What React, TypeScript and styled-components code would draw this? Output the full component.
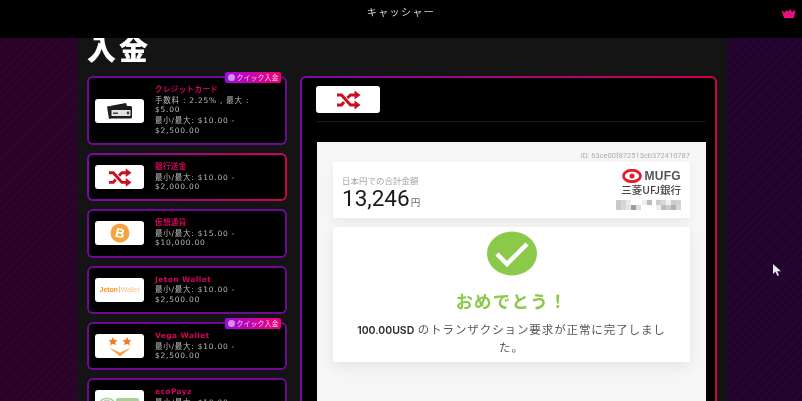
import styled, { createGlobalStyle } from 'styled-components';

const GlobalStyle = createGlobalStyle`
  html, body {
    margin: 0;
    height: 401px;
    overflow: hidden;
    background: #000;
  }
  * {
    box-sizing: border-box;
  }
  #root {
    font-family: "DejaVu Sans", "Noto Sans CJK JP", sans-serif;
  }
`;

const Page = styled.div`
  position: relative;
  width: 802px;
  height: 401px;
  overflow: hidden;
  filter: blur(0.35px);
  background-image:
    repeating-linear-gradient(
      135deg,
      rgba(0, 0, 0, 0.13) 0 3px,
      transparent 3px 6px
    ),
    linear-gradient(90deg, #2e042c 0 78px, #250432 727px);
`;

const TopBar = styled.header`
  height: 38px;
  background: #000;
  display: flex;
  align-items: flex-start;
  justify-content: center;
  position: relative;
  z-index: 1;
  color: #d8d8d8;
  font-family: "Noto Sans CJK JP", sans-serif;
  font-size: 10px;
  letter-spacing: 1.4px;
  padding-top: 4px;
  line-height: 16px;
`;

const Crown = styled.svg`
  position: absolute;
  right: 6px;
  top: 9px;
`;

const Container = styled.main`
  width: 649px;
  height: 363px;
  margin-left: 78px;
  background: #141414;
  padding: 0 10px 0 9px;
`;

const Title = styled.h1`
  margin: 0;
  height: 38px;
  font-family: "Noto Sans CJK JP", sans-serif;
  font-size: 29px;
  font-weight: 900;
  line-height: 18px;
  letter-spacing: 3px;
  color: #fff;
`;

const Columns = styled.div`
  display: flex;
  gap: 13px;
  align-items: flex-start;
`;

const MethodList = styled.div`
  width: 200px;
  display: flex;
  flex-direction: column;
  gap: 8px;
  flex-shrink: 0;
`;

const MethodCard = styled.div<{ $active?: boolean; $h: number }>`
  position: relative;
  height: ${(p) => p.$h}px;
  border: 2px solid transparent;
  border-radius: 6px;
  background:
    linear-gradient(#000, #000) padding-box,
    ${(p) =>
        p.$active
          ? 'linear-gradient(90deg, #7a0aa8, #d3004f)'
          : 'linear-gradient(#6f0a96, #6f0a96)'}
      border-box;
  display: flex;
  align-items: center;
  padding-left: 6px;
  gap: 11px;
`;

const LogoBox = styled.div<{ $w?: number; $h?: number }>`
  width: ${(p) => p.$w ?? 49}px;
  height: ${(p) => p.$h ?? 24}px;
  flex-shrink: 0;
  background: #fff;
  border-radius: 3px;
  display: flex;
  align-items: center;
  justify-content: center;
  overflow: hidden;
`;

const EcoLogoBox = styled(LogoBox)`
  align-items: flex-start;
  padding-top: 6px;
`;

const JetonLogo = styled.span`
  font-family: "Liberation Sans", sans-serif;
  font-size: 7px;
  font-weight: 700;
  color: #f7931e;
  letter-spacing: -0.1px;
  white-space: nowrap;
  i {
    font-style: normal;
    font-weight: 400;
    color: #f9c48a;
    border-left: 1px solid #f9c48a;
    margin-left: 1px;
    padding-left: 1px;
  }
`;

const MethodText = styled.div`
  display: flex;
  flex-direction: column;
  color: #b9b9b9;
  font-size: 7.5px;
  line-height: 9.5px;
  letter-spacing: 0.75px;
  width: 118px;
  padding-top: 1px;
`;

const MethodName = styled.div`
  color: #d4005e;
  font-weight: 700;
  letter-spacing: 0.4px;
  margin-bottom: 1px;
`;

const MethodLine = styled.div`
  margin-bottom: 1.5px;
`;

const QuickBadge = styled.div`
  position: absolute;
  top: -6px;
  right: 4px;
  height: 11px;
  width: 56px;
  border-radius: 2px;
  background: linear-gradient(90deg, #a00ae0, #f00070);
  color: #f3d3ee;
  font-family: "Noto Sans CJK JP", sans-serif;
  font-size: 7px;
  line-height: 11px;
  display: flex;
  align-items: center;
  justify-content: center;
  gap: 2px;
  white-space: nowrap;
`;

const BadgeDot = styled.span`
  width: 7px;
  height: 7px;
  border-radius: 50%;
  background: #d58fe8;
`;

const DetailPanel = styled.section`
  width: 418px;
  height: 340px;
  border: 2px solid transparent;
  border-radius: 6px;
  background:
    linear-gradient(#000, #000) padding-box,
    linear-gradient(90deg, #7a0aa8, #d3004f) border-box;
  padding: 8px 9px 0 15px;
`;

const DetailHead = styled.div`
  height: 36px;
  margin-left: -1px;
  border-bottom: 1px solid #1b1b1b;
`;

const Sheet = styled.div`
  margin-top: 20px;
  height: 300px;
  background: #f6f6f6;
  padding: 8px 16px 0;
`;

const OrderId = styled.div`
  text-align: right;
  font-family: Roboto, sans-serif;
  font-size: 7.5px;
  line-height: 12px;
  color: #adadad;
`;

const WhiteCard = styled.div`
  background: #fff;
  border-radius: 2px;
  box-shadow: 0 4px 10px rgba(0, 0, 0, 0.05);
`;

const AmountCard = styled(WhiteCard)`
  height: 56px;
  display: flex;
  justify-content: space-between;
  padding: 12px 9px 0 9px;
`;

const AmountLabel = styled.div`
  font-family: "Noto Sans CJK JP", sans-serif;
  font-size: 8.5px;
  line-height: 12px;
  color: #a3a3a3;
`;

const AmountValue = styled.div`
  font-family: Roboto, sans-serif;
  font-size: 22.5px;
  line-height: 25px;
  color: #1a1a1a;
  small {
    font-family: "Noto Sans CJK JP", sans-serif;
    font-size: 9.5px;
    color: #666;
    margin-left: 1px;
  }
`;

const BankBlock = styled.div`
  display: flex;
  flex-direction: column;
  align-items: flex-end;
  margin-top: -5px;
`;

const MufgRow = styled.div`
  display: flex;
  align-items: center;
  gap: 2px;
  font-family: "Liberation Sans", sans-serif;
  font-weight: 700;
  font-size: 12px;
  line-height: 14px;
  letter-spacing: 0.3px;
  color: #555;
`;

const BankName = styled.div`
  font-family: "Noto Sans CJK JP", sans-serif;
  font-weight: 500;
  font-size: 10.5px;
  line-height: 13px;
  color: #444;
  margin-bottom: 4px;
`;

const ResultCard = styled(WhiteCard)`
  height: 135px;
  margin-top: 9px;
  display: flex;
  flex-direction: column;
  align-items: center;
  padding: 4px 22px 0;
  box-shadow: 0 5px 14px rgba(0, 0, 0, 0.07);
`;

const Congrats = styled.div`
  margin-top: 13px;
  font-family: "Noto Sans CJK JP", sans-serif;
  font-size: 17.5px;
  line-height: 24px;
  font-weight: 700;
  letter-spacing: 1.2px;
  color: #8bc94a;
`;

const ResultText = styled.p`
  margin: 8px 0 0;
  text-align: center;
  font-family: "Noto Sans CJK JP", sans-serif;
  font-size: 11.5px;
  line-height: 17px;
  letter-spacing: 0.9px;
  color: #555;
  b {
    font-family: Inter, sans-serif;
    font-size: 10.5px;
    font-weight: 600;
    letter-spacing: 0;
    color: #2a2a2a;
  }
`;

const Pointer = styled.svg`
  position: absolute;
  left: 773px;
  top: 264px;
`;

function ShuffleIcon({ size }: { size: number }) {
  return (
    <svg width={size} height={size * 0.8} viewBox="0 0 25 20" fill="none">
      <path
        d="M1 5h4.500l9 10H19M1 15h4.500l2.500-3M11.500 8l3-3H19"
        stroke="#c9101f"
        strokeWidth="3"
      />
      <path d="M18.500 0.500l6 4.500-6 4.500zM18.500 10.500l6 4.500-6 4.500z" fill="#c9101f" />
    </svg>
  );
}

function WalletIcon() {
  return (
    <svg width="27" height="16" viewBox="0 0 27 16">
      <path d="M1 3.500L20 0l1 3H4.500l.5 12.500L3 16z" fill="#1d1d1d" />
      <rect x="4" y="3" width="22" height="12.500" rx="1.500" fill="#1d1d1d" />
      <rect x="5.500" y="7" width="19" height="6" fill="#e2e2e2" />
      <rect x="7" y="9.500" width="5" height="1.500" fill="#444" />
      <circle cx="22" cy="10" r="1.400" fill="#444" />
    </svg>
  );
}

function BitcoinIcon() {
  return (
    <svg width="20" height="20" viewBox="0 0 20 20">
      <circle cx="10" cy="10" r="9.500" fill="#f7a440" />
      <text
        x="10"
        y="14.500"
        textAnchor="middle"
        fontFamily="Liberation Sans, sans-serif"
        fontWeight="700"
        fontSize="13"
        fill="#fff"
        transform="rotate(12 10 10)"
      >
        B
      </text>
    </svg>
  );
}

function VegaIcon() {
  return (
    <svg width="24" height="21" viewBox="0 0 24 21">
      <path
        d="M5 1l1.500 3 3 .3-2.200 2 .6 3-2.900-1.600-2.900 1.600.6-3L.5 4.300l3-.3zM19 1l1.500 3 3 .3-2.200 2 .6 3-2.900-1.600-2.900 1.600.6-3-2.200-2 3-.3z"
        fill="#f47b20"
      />
      <path d="M1 11.500l11 5 11-5-11 9z" fill="#f9a557" />
    </svg>
  );
}

function EcoPayzLogo() {
  return (
    <svg width="42" height="12" viewBox="0 0 42 12">
      <ellipse cx="8" cy="7" rx="7" ry="4.500" fill="none" stroke="#a9d096" strokeWidth="1.500" />
      <rect x="5" y="4.500" width="6" height="4" fill="#8a9a8a" />
      <rect x="17" y="2" width="23" height="8" rx="2" fill="#a9d096" />
    </svg>
  );
}

function MufgMark() {
  return (
    <svg width="20" height="14" viewBox="0 0 20 14">
      <ellipse cx="10" cy="7" rx="8.500" ry="5.700" fill="none" stroke="#e2202c" strokeWidth="2.800" />
      <circle cx="10" cy="7" r="2.500" fill="#e2202c" />
    </svg>
  );
}

const MOSAIC: ReadonlyArray<readonly [number, number, string]> = [
  [0, 0, '#cacaca'], [5, 0, '#d6d6d6'], [10, 0, '#ebebeb'], [26, 0, '#eeeeee'], [31, 0, '#bcbcbc'],
  [40, 0, '#cccccc'], [45, 0, '#d8d8d8'], [50, 0, '#f0f0f0'], [55, 0, '#cdcdcd'], [60, 0, '#d2d2d2'],
  [0, 5, '#c8c8c8'], [5, 5, '#d8d8d8'], [10, 5, '#e4e4e4'], [15, 5, '#9c9c9c'], [20, 5, '#dddddd'],
  [40, 5, '#eeeeee'], [45, 5, '#bcbcbc'], [50, 5, '#cccccc'], [55, 5, '#a8b4c2'], [60, 5, '#d8d8d8'],
];

function Mosaic() {
  return (
    <svg width="65" height="10" viewBox="0 0 65 10">
      {MOSAIC.map(([x, y, fill]) => (
        <rect key={`${x}-${y}`} x={x} y={y} width="5" height="5" fill={fill} />
      ))}
    </svg>
  );
}

function Badge() {
  return (
    <QuickBadge>
      <BadgeDot />
      クイック入金
    </QuickBadge>
  );
}

export default function App() {
  return (
    <Page>
      <GlobalStyle />
      <TopBar>
        キャッシャー
        <Crown width="15" height="9" viewBox="0 0 14 9">
          <path d="M0 1l3 2.500L5 1l2 1.500L9 0l1.500 3L14 1l-1.500 8h-10z" fill="#e8107e" />
        </Crown>
      </TopBar>
      <Container>
        <Title>入金</Title>
        <Columns>
          <MethodList>
            <MethodCard $h={69}>
              <Badge />
              <LogoBox>
                <WalletIcon />
              </LogoBox>
              <MethodText>
                <MethodName>クレジットカード</MethodName>
                <MethodLine>手数料 : 2.25% , 最大 : $5.00</MethodLine>
                <MethodLine>最小/最大: $10.00 - $2,500.00</MethodLine>
              </MethodText>
            </MethodCard>
            <MethodCard $h={48.3} $active>
              <LogoBox>
                <ShuffleIcon size={24} />
              </LogoBox>
              <MethodText>
                <MethodName>銀行送金</MethodName>
                <MethodLine>最小/最大: $10.00 - $2,000.00</MethodLine>
              </MethodText>
            </MethodCard>
            <MethodCard $h={48.3}>
              <LogoBox>
                <BitcoinIcon />
              </LogoBox>
              <MethodText>
                <MethodName>仮想通貨</MethodName>
                <MethodLine>最小/最大: $15.00 - $10,000.00</MethodLine>
              </MethodText>
            </MethodCard>
            <MethodCard $h={48.3}>
              <LogoBox>
                <JetonLogo>
                  Jeton<i>Wallet</i>
                </JetonLogo>
              </LogoBox>
              <MethodText>
                <MethodName>Jeton Wallet</MethodName>
                <MethodLine>最小/最大: $10.00 - $2,500.00</MethodLine>
              </MethodText>
            </MethodCard>
            <MethodCard $h={48.3}>
              <Badge />
              <LogoBox>
                <VegaIcon />
              </LogoBox>
              <MethodText>
                <MethodName>Vega Wallet</MethodName>
                <MethodLine>最小/最大: $10.00 - $2,500.00</MethodLine>
              </MethodText>
            </MethodCard>
            <MethodCard $h={48.3}>
              <EcoLogoBox>
                <EcoPayzLogo />
              </EcoLogoBox>
              <MethodText>
                <MethodName>ecoPayz</MethodName>
                <MethodLine>最小/最大: $10.00 - $2,500.00</MethodLine>
              </MethodText>
            </MethodCard>
          </MethodList>
          <DetailPanel>
            <DetailHead>
              <LogoBox $w={64} $h={27}>
                <ShuffleIcon size={25} />
              </LogoBox>
            </DetailHead>
            <Sheet>
              <OrderId>ID: 63ce00f872513cb372410787</OrderId>
              <AmountCard>
                <div>
                  <AmountLabel>日本円での合計金額</AmountLabel>
                  <AmountValue>
                    13,246<small>円</small>
                  </AmountValue>
                </div>
                <BankBlock>
                  <MufgRow>
                    <MufgMark />
                    MUFG
                  </MufgRow>
                  <BankName>三菱UFJ銀行</BankName>
                  <Mosaic />
                </BankBlock>
              </AmountCard>
              <ResultCard>
                <svg width="50" height="45" viewBox="0 0 50 45">
                  <ellipse cx="25" cy="22.500" rx="25" ry="22" fill="#8bc94a" />
                  <path d="M10 23l10 10 20-20" fill="none" stroke="#fff" strokeWidth="4.500" />
                </svg>
                <Congrats>おめでとう！</Congrats>
                <ResultText>
                  <b>100.00USD</b> のトランザクション要求が正常に完了しました。
                </ResultText>
              </ResultCard>
            </Sheet>
          </DetailPanel>
        </Columns>
      </Container>
      <Pointer width="9" height="12" viewBox="0 0 9 12">
        <path d="M0 0v10l2.500-2.200L4.500 12l1.500-.7-1.800-4H8z" fill="#e8e8e8" />
      </Pointer>
    </Page>
  );
}
